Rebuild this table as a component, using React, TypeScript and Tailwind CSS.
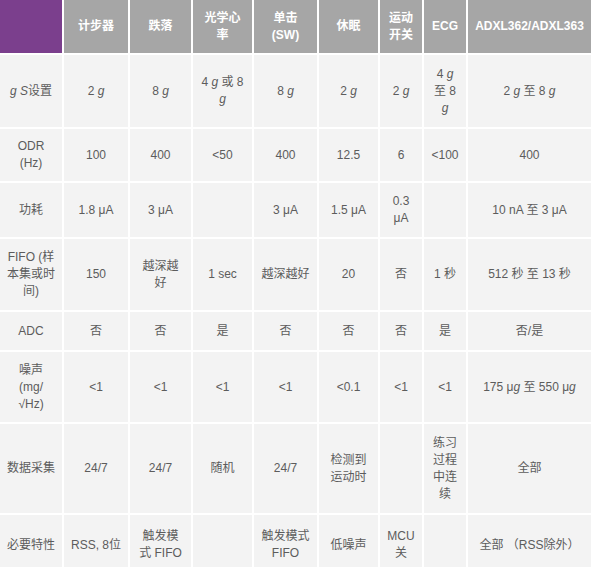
import React from "react";

type Cell = React.ReactNode;

const G = () => <i>g</i>;

const headers: Cell[] = [
  "",
  "计步器",
  "跌落",
  "光学心率",
  "单击 (SW)",
  "休眠",
  "运动开关",
  "ECG",
  "ADXL362/ADXL363",
];

const rows: Cell[][] = [
  [
    <><i>g</i> <i>S</i>设置</>,
    <>2 <G /></>,
    <>8 <G /></>,
    <>4 <G /> 或 8 <G /></>,
    <>8 <G /></>,
    <>2 <G /></>,
    <>2 <G /></>,
    <>4 <G /> 至 8 <G /></>,
    <>2 <G /> 至 8 <G /></>,
  ],
  [<>ODR<br />(Hz)</>, "100", "400", "<50", "400", "12.5", "6", "<100", "400"],
  ["功耗", "1.8 μA", "3 μA", "", "3 μA", "1.5 μA", <>0.3<br />μA</>, "", "10 nA 至 3 μA"],
  [<>FIFO (样<br />本集或时<br />间)</>, "150", "越深越好", "1 sec", "越深越好", "20", "否", "1 秒", "512 秒 至 13 秒"],
  ["ADC", "否", "否", "是", "否", "否", "否", "是", "否/是"],
  [
    <>噪声<br />(mg/<br />√Hz)</>,
    "<1",
    "<1",
    "<1",
    "<1",
    "<0.1",
    "<1",
    "<1",
    <>175 μ<G /> 至 550 μ<G /></>,
  ],
  ["数据采集", "24/7", "24/7", "随机", "24/7", "检测到运动时", "", "练习过程中连续", "全部"],
  [
    "必要特性",
    <span className="whitespace-nowrap">RSS, 8位</span>,
    "触发模式 FIFO",
    "",
    "触发模式 FIFO",
    "低噪声",
    <>MCU<br />关</>,
    "",
    "全部 （RSS除外）",
  ],
];

export default function App() {
  return (
    <div
      className="w-[591px] h-[567px] overflow-hidden bg-white"
      style={{ fontFamily: '"Liberation Sans", "Noto Sans CJK SC", sans-serif' }}
    >
      <div className="grid grid-cols-[62px_64px_61px_59px_63px_59px_42px_42px_1fr] grid-rows-[53px_72px_52px_54px_71px_38px_70px_89px_60px] gap-[2px] text-[12px] leading-[17px]">
        {headers.map((h, i) => (
          <div
            key={"h" + i}
            className={
              "flex items-center justify-center text-center px-[7px] font-bold text-white " +
              (i === 0 ? "bg-[#7b3f8d]" : "bg-[#a6a6a6]")
            }
          >
            {h}
          </div>
        ))}
        {rows.map((r, ri) =>
          r.map((c, ci) => (
            <div
              key={ri + "-" + ci}
              className="flex items-center justify-center text-center px-[7px] bg-[#f3f3f3] text-[#5c5c5c]"
            >
              <span>{c}</span>
            </div>
          ))
        )}
      </div>
    </div>
  );
}
